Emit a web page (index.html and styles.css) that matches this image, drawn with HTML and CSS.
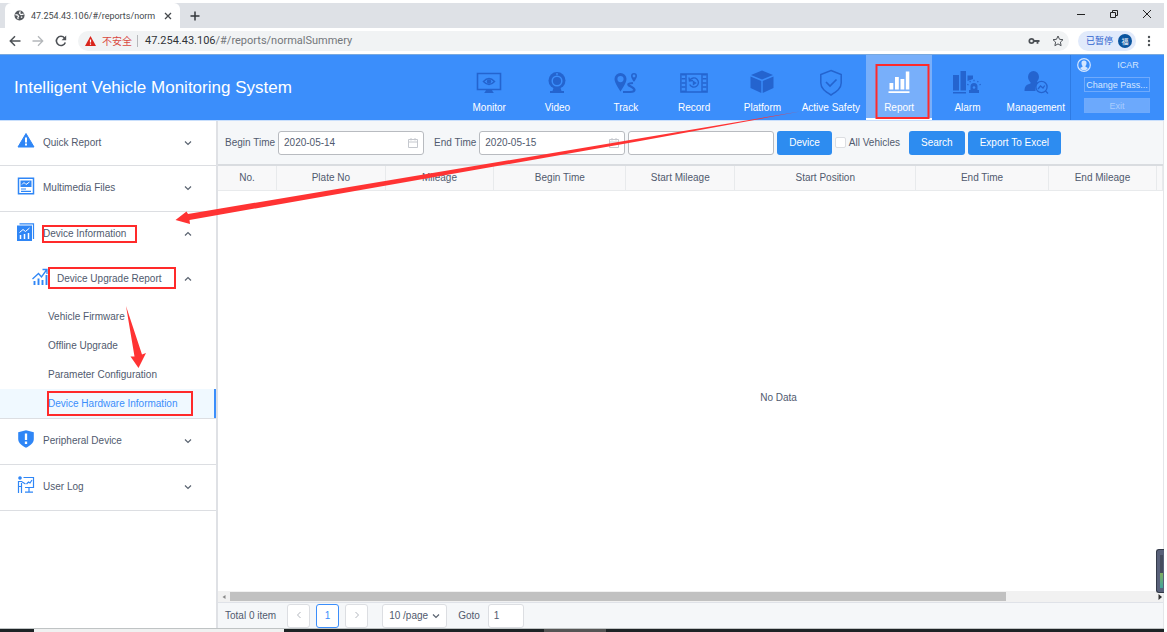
FILE: index.html
```html
<!DOCTYPE html>
<html lang="en">
<head>
<meta charset="utf-8">
<title>Intelligent Vehicle Monitoring System</title>
<link rel="stylesheet" href="styles.css">
</head>
<body>
<div class="window">
  <div class="tabstrip">
    <div class="tab">
      <svg class="globe" viewBox="0 0 12 12"><circle cx="6" cy="6" r="5.500" fill="#54585d"/><path d="M1.500 5l2.500.5 1 1.500-.8 1L4.500 10M7 1.500L6 3.500 7.500 5 10.500 4.500M7.500 7.500l1.500.5" fill="none" stroke="#fff" stroke-width="1.300"/></svg>
      <span class="tab-title">47.254.43.106/#/reports/norm</span>
      <button class="plain" aria-label="Close tab"><svg width="8" height="8" viewBox="0 0 8 8"><path d="M1 1l6 6M7 1L1 7" stroke="#45494d" stroke-width="1.300"/></svg></button>
    </div>
    <button class="plain newtab" aria-label="New tab"><svg width="10" height="10" viewBox="0 0 10 10"><path d="M5 .5v9M.5 5h9" stroke="#33373b" stroke-width="1.500"/></svg></button>
    <div class="winbtns">
      <button class="plain" aria-label="Minimize"><svg width="10" height="10" viewBox="0 0 10 10"><path d="M1 5.500h8" stroke="#222"/></svg></button>
      <button class="plain" aria-label="Restore"><svg width="10" height="10" viewBox="0 0 10 10"><path d="M1.500 3.500h5v5h-5zM3.500 3V1.500h5v5H7" fill="none" stroke="#222"/></svg></button>
      <button class="plain" aria-label="Close"><svg width="10" height="10" viewBox="0 0 10 10"><path d="M1 1l8 8M9 1L1 9" stroke="#222"/></svg></button>
    </div>
  </div>

  <div class="addressbar">
    <button class="plain" aria-label="Back"><svg width="12" height="12" viewBox="0 0 12 12"><path d="M11.500 6H1.500M6 1.300L1.300 6 6 10.700" fill="none" stroke="#4d5156" stroke-width="1.500"/></svg></button>
    <button class="plain" aria-label="Forward"><svg width="12" height="12" viewBox="0 0 12 12"><path d="M.5 6h10M6 1.300L10.700 6 6 10.700" fill="none" stroke="#b4b7ba" stroke-width="1.300"/></svg></button>
    <button class="plain" aria-label="Reload"><svg width="12" height="12" viewBox="0 0 12 12"><path d="M10.300 7.500A4.600 4.600 0 1 1 9.500 2.900" fill="none" stroke="#4d5156" stroke-width="1.600"/><path d="M11.200.6v4.600H6.600z" fill="#4d5156"/></svg></button>
    <div class="url">
      <svg width="11" height="10" viewBox="0 0 11 10"><path d="M5.500 0L11 10H0z" fill="#d9251c"/><path d="M5.500 3.500v3M5.500 7.500v1.200" stroke="#fff" stroke-width="1.200"/></svg>
      <span class="unsafe">不安全</span>
      <span class="url-text"><b>47.254.43.106</b>/#/reports/normalSummery</span>
      <svg class="key" width="12" height="8" viewBox="0 0 12 8"><circle cx="3.500" cy="4" r="2.200" fill="none" stroke="#4d5156" stroke-width="1.700"/><path d="M6 4h5.500M9.500 4v2.800" stroke="#4d5156" stroke-width="1.800"/></svg>
      <svg width="12" height="12" viewBox="0 0 12 12"><path d="M6 1l1.500 3.300 3.500.4-2.600 2.400.7 3.600L6 8.900l-3.100 1.800.7-3.600L1 4.700l3.500-.4z" fill="none" stroke="#4d5156"/></svg>
    </div>
    <div class="profile"><span>已暂停</span><i>福</i></div>
    <button class="plain" aria-label="Menu"><svg width="4" height="12" viewBox="0 0 4 12" fill="#4d5156"><circle cx="2" cy="2" r="1.200"/><circle cx="2" cy="6" r="1.200"/><circle cx="2" cy="10" r="1.200"/></svg></button>
  </div>

  <header class="header">
    <h1>Intelligent Vehicle Monitoring System</h1>
    <nav class="nav">
      <a href="#"><svg viewBox="0 0 28 28"><path d="M2.500 5.500h23v16h-23z" fill="none" stroke="#2464cf" stroke-width="1.600"/><path d="M11 22h6l1 2 1 1H9l1-1z" fill="#2464cf"/><path d="M8.500 13.500q5.500-6 11 0-5.500 6-11 0z" fill="none" stroke="#2464cf" stroke-width="1.500"/><circle cx="14" cy="13.500" r="2.200" fill="#2464cf"/></svg>Monitor</a>
      <a href="#"><svg viewBox="0 0 28 28"><circle cx="14" cy="12.500" r="8.500" fill="#2464cf"/><circle cx="14" cy="13" r="4.800" fill="none" stroke="#3b8efb" stroke-width="1.500"/><circle cx="14" cy="6" r=".9" fill="#3b8efb"/><path d="M10.500 20h7l1 3H21v2H7v-2h2.500z" fill="#2464cf"/></svg>Video</a>
      <a href="#"><svg viewBox="0 0 28 28"><path d="M8.500 5a6 6 0 0 0-6 6c0 4 6 12.500 6 12.500s6-8.500 6-12.500a6 6 0 0 0-6-6zm0 3a3 3 0 1 1 0 6.200 3 3 0 0 1 0-6.200z" fill="#2464cf" fill-rule="evenodd"/><path d="M22 5a3 3 0 0 0-3 3c0 2 3 6 3 6s3-4 3-6a3 3 0 0 0-3-3zm0 1.600a1.400 1.400 0 1 1 0 2.800 1.400 1.400 0 0 1 0-2.800z" fill="#2464cf" fill-rule="evenodd"/><path d="M21 15c-5 .5-6 1.500-3 3 5 2.500 7 5.500 0 6h-7" fill="none" stroke="#2464cf" stroke-width="2.200"/></svg>Track</a>
      <a href="#"><svg viewBox="0 0 28 28"><path d="M.9 6h26.200v18H.9zM6 6v18M22 6v18" fill="none" stroke="#2464cf" stroke-width="1.400"/><path d="M3.500 6v18M24.500 6v18" stroke="#2464cf" stroke-width="4" stroke-dasharray="1.500 2.600"/><path d="M10 12a4.600 4.600 0 1 1-.3 4.500M9 9.500l.5 3.500 3.500-.5" fill="none" stroke="#2464cf" stroke-width="1.400"/><path d="M12.800 12.500l4 2.500-4 2.500z" fill="#2464cf"/></svg>Record</a>
      <a href="#"><svg viewBox="0 0 28 28"><path d="M14 2.500l11 4.500-11 4.500L3 7zM2.500 8.500l10.800 4.400v12L2.500 20zM25.500 8.500l-10.800 4.400v12L25.500 20z" fill="#2464cf"/></svg>Platform</a>
      <a href="#"><svg viewBox="0 0 28 28"><path d="M14 2.500l10.200 4V15c0 5.500-4.500 8.500-10.200 12C8.300 23.500 3.800 20.500 3.800 15V6.500z" fill="none" stroke="#2464cf" stroke-width="1.500"/><path d="M9 14l4 4 6.500-6.500" fill="none" stroke="#2464cf" stroke-width="1.700"/></svg>Active Safety</a>
      <a href="#" class="active"><svg viewBox="0 0 28 28" fill="#fff"><path d="M3.500 23.300h21V25h-21zM4.500 15h3.800v6.500H4.500zM10 9h3.800v12.500H10zM15.500 11h3.800v10.500h-3.800zM20.800 3.500h3.500v18h-3.500z"/></svg>Report</a>
      <a href="#"><svg viewBox="0 0 28 28" fill="#2464cf"><path d="M0 7h6v15.500H0zM7.500 3H13v19.500H7.500zM14.500 7.500H20V11l-5.500 2zM0 24h13v1.500H0zM17.500 18.500a3.500 3.500 0 0 1 7 0V22H26v3H16v-3h1.500z"/><circle cx="21" cy="19.500" r="1.300" fill="#3b8efb"/><path d="M15.500 17l-1.200-.8M17.500 14.300l-.7-1.200M21 13.300v-1.500M24.500 14.300l.7-1.200M26.500 17l1.200-.8" stroke="#2464cf" stroke-width="1.200"/></svg>Alarm</a>
      <a href="#"><svg viewBox="0 0 28 28"><ellipse cx="11.500" cy="9" rx="5.500" ry="6" fill="#2464cf"/><path d="M8.500 13h6l2 3-3 3v4h-11c0-5 2-6.500 6-7.500z" fill="#2464cf"/><circle cx="19.500" cy="19" r="5.600" fill="#3b8efb" stroke="#2464cf" stroke-width="1.300"/><path d="M16 21l2.500-3 2.500 2 1.700-2.500M23.500 23l2.500 2.500" fill="none" stroke="#2464cf" stroke-width="1.300"/></svg>Management</a>
    </nav>
    <div class="user">
      <div class="who"><svg width="14" height="14" viewBox="0 0 14 14"><circle cx="7" cy="7" r="6.300" fill="none" stroke="#d5e6ff" stroke-width="1.200"/><path d="M7 2.500a2.500 2.500 0 0 0-2.500 2.700c0 1.500.7 2.300 1 2.800v.8l-2 1V11q3.500 2.500 7 0V9.800l-2-1V8c.3-.5 1-1.300 1-2.800A2.500 2.500 0 0 0 7 2.500z" fill="#d5e6ff"/></svg><span>ICAR</span></div>
      <button class="pass">Change Pass...</button>
      <button class="exit">Exit</button>
    </div>
  </header>

  <div class="body">
    <aside class="side">
      <section>
        <button class="row"><svg class="ico" viewBox="0 0 18 18"><path d="M9 1.500L17 15H1z" fill="#2f86f6" stroke="#2f86f6" stroke-linejoin="round"/><path d="M9 5.500v5M9 11.500v2" stroke="#fff" stroke-width="2"/></svg><span>Quick Report</span><svg class="chev" viewBox="0 0 8 8"><path d="M1 2.500l3 3 3-3"/></svg></button>
      </section>
      <section>
        <button class="row"><svg class="ico" viewBox="0 0 18 18"><path d="M1.500 1.200h15v15.500h-15z" fill="#fff" stroke="#2f86f6" stroke-width="1.500"/><path d="M3.500 3.500h11v6.500h-11z" fill="#2f86f6"/><path d="M5 7.500l2-2 2 2 3.500-2.500" stroke="#fff" fill="none"/><path d="M4 12h5M4 14.300h10" stroke="#2f86f6" stroke-width="1.200"/></svg><span>Multimedia Files</span><svg class="chev" viewBox="0 0 8 8"><path d="M1 2.500l3 3 3-3"/></svg></button>
      </section>
      <section>
        <button class="row"><svg class="ico" viewBox="0 0 18 18"><path d="M2.500.8h14V16" fill="none" stroke="#2f86f6" stroke-width="1.200"/><path d="M0 2.500h15v15.500H0z" fill="#2f86f6"/><path d="M3.500 16v-4M7.500 16v-5M11.500 16v-6" stroke="#fff" stroke-width="1.500"/><path d="M2.500 9.500l3.500-3 2.500 2L12.500 5" fill="none" stroke="#fff"/></svg><span>Device Information</span><svg class="chev" viewBox="0 0 8 8"><path d="M1 5.500l3-3 3 3"/></svg></button>
        <button class="row sub"><svg class="ico" viewBox="0 0 18 18"><path d="M3.500 17v-4M7.500 17v-6.500M11.500 17v-5M15.500 17V7" stroke="#2f86f6" stroke-width="1.900"/><path d="M1.500 11l6-5.500 3 3.500L15.500 2M11.500 1.500H16V6" fill="none" stroke="#2f86f6" stroke-width="1.300"/></svg><span>Device Upgrade Report</span><svg class="chev" viewBox="0 0 8 8"><path d="M1 5.500l3-3 3 3"/></svg></button>
        <ul>
          <li><a href="#">Vehicle Firmware</a></li>
          <li><a href="#">Offline Upgrade</a></li>
          <li><a href="#">Parameter Configuration</a></li>
          <li><a href="#" class="on">Device Hardware Information</a></li>
        </ul>
      </section>
      <section>
        <button class="row"><svg class="ico" viewBox="0 0 18 18"><path d="M9 .3l7.800 2V9c0 4-3.500 6.500-7.800 8.800C4.700 15.500 1.200 13 1.200 9V2.300z" fill="#2f86f6"/><path d="M9 3.500v6.500M9 11.500v2.500" stroke="#fff" stroke-width="2.300"/></svg><span>Peripheral Device</span><svg class="chev" viewBox="0 0 8 8"><path d="M1 2.500l3 3 3-3"/></svg></button>
      </section>
      <section>
        <button class="row"><svg class="ico" viewBox="0 0 18 18" fill="none" stroke="#2f86f6" stroke-width="1.200"><circle cx="3" cy="2" r="1.200" fill="#2f86f6"/><path d="M6.500 1.500h10v10H8M12 11.500v4M8 16.200h8M1.500 17V5.500h3L8.500 8M4.500 17V7M1.500 10.500h3M9.500 8l2-2 1.500 1 2-3"/></svg><span>User Log</span><svg class="chev" viewBox="0 0 8 8"><path d="M1 2.500l3 3 3-3"/></svg></button>
      </section>
    </aside>

    <main class="main">
      <form class="filters">
        <label for="begin">Begin Time</label>
        <span class="field"><input id="begin" type="text" value="2020-05-14"><svg viewBox="0 0 10 10"><path d="M.5 1.500h9v8h-9zM.5 4h9M3 0v2.500M7 0v2.500"/></svg></span>
        <label for="end" class="end">End Time</label>
        <span class="field"><input id="end" type="text" value="2020-05-15"><svg viewBox="0 0 10 10"><path d="M.5 1.500h9v8h-9zM.5 4h9M3 0v2.500M7 0v2.500"/></svg></span>
        <span class="field"><input type="text" aria-label="Device"></span>
        <button type="button" class="btn">Device</button>
        <label class="all"><input type="checkbox">All Vehicles</label>
        <button type="button" class="btn">Search</button>
        <button type="button" class="btn">Export To Excel</button>
      </form>
      <table class="grid">
        <colgroup><col class="c-no"><col class="c-s"><col class="c-s"><col class="c-m"><col class="c-s"><col class="c-l"><col class="c-m"><col class="c-s"><col class="c-end"></colgroup>
        <thead><tr><th>No.</th><th>Plate No</th><th>Mileage</th><th>Begin Time</th><th>Start Mileage</th><th>Start Position</th><th>End Time</th><th>End Mileage</th><th></th></tr></thead>
      </table>
      <div class="empty">No Data
        <div class="meter"><i></i></div>
      </div>
      <div class="scroll"><svg width="6" height="6" viewBox="0 0 6 6"><path d="M4.500 1v4L1.500 3z" fill="#888"/></svg><div class="track"><div class="thumb"></div></div><svg width="6" height="6" viewBox="0 0 6 6"><path d="M1.500 0v6L5 3z" fill="#333"/></svg></div>
      <div class="pager">
        <span class="total">Total 0 item</span>
        <button aria-label="Previous page"><svg width="8" height="8" viewBox="0 0 8 8"><path d="M5.500 1l-3 3 3 3"/></svg></button>
        <button class="current">1</button>
        <button aria-label="Next page"><svg width="8" height="8" viewBox="0 0 8 8"><path d="M2.500 1l3 3-3 3"/></svg></button>
        <span class="size"><select aria-label="Page size"><option>10 /page</option></select><svg class="chev" viewBox="0 0 8 8"><path d="M1 2.500l3 3 3-3"/></svg></span>
        <label for="goto">Goto</label>
        <input id="goto" type="text" value="1">
      </div>
    </main>
  </div>
  <div class="taskbar"><i></i><b></b><em></em></div>

  <svg class="marks" width="1167" height="632" viewBox="0 0 1167 632">
    <g fill="none" stroke="#ff2a2a" stroke-width="2">
      <path d="M876.500 65h52v53h-52zM43 226h93v16H43zM49 268h126v20H49zM48 392h144v23H48z"/>
    </g>
    <g fill="#ff3333">
      <path d="M800 111.500L188 214 186.500 211.500 175.500 220 190 224 189.500 220 640 141z"/>
      <path d="M126 306L142 354.500 146 353 138.500 368 130.500 356.500 134.500 356.500z"/>
    </g>
  </svg>
</div>
</body>
</html>
```

FILE: styles.css
```css
* { box-sizing: border-box; }
body { margin: 0; font: 10px/16px "Liberation Sans", Arial, sans-serif; color: #515a6e; background: #fff; }
button, input, select { font: inherit; color: inherit; }
button { cursor: pointer; }
a { color: inherit; text-decoration: none; }
.window { position: relative; display: flex; flex-direction: column; min-height: 100vh; padding: 3px 3px 0 0; }
.plain { display: flex; align-items: center; justify-content: center; padding: 0; border: 0; background: none; }

.tabstrip { display: flex; align-items: center; height: 25px; background: #dee1e6; font-family: Roboto, "Noto Sans", sans-serif; }
.tab { display: flex; align-items: center; align-self: stretch; width: 175px; margin-left: 5px; padding: 0 8px 0 9px; gap: 6px; background: #fff; border-radius: 6px 6px 0 0; }
.globe { width: 11px; height: 11px; flex: none; }
.tab-title { flex: 1; white-space: nowrap; font-size: 9px; color: #45494d; }
.newtab { margin-left: 10px; }
.winbtns { display: flex; gap: 23px; margin-left: auto; padding: 0 12px 4px 0; }

.addressbar { display: flex; align-items: center; gap: 11px; height: 26px; padding: 0 13px 0 9px; font-size: 11px; font-family: Roboto, "Noto Sans CJK SC", sans-serif; }
.url { display: flex; align-items: center; flex: 1; height: 20px; padding: 0 5px 0 7px; border-radius: 10px; background: #f1f3f4; }
.unsafe { margin-left: 6px; padding-right: 5px; border-right: 1px solid #b5b8bb; line-height: 12px; font-family: "Noto Sans CJK SC", sans-serif; font-size: 10px; color: #d9483f; }
.url-text { flex: 1; margin-left: 7px; color: #73777b; }
.url-text b { font-weight: 400; color: #303438; }
.key { margin-right: 12px; }
.profile { display: flex; align-items: center; gap: 5px; height: 20px; margin-left: -2px; padding: 0 4px 0 8px; border-radius: 10px; background: #e1eafb; color: #3063cf; font: 9px/12px "Noto Sans CJK SC", sans-serif; }
.profile i { width: 14px; height: 14px; border-radius: 50%; background: #0b559f; color: #fff; font: 7px/14px "Noto Sans CJK SC", sans-serif; text-align: center; }

.header { display: flex; height: 67px; border-top: 1px solid #79a9de; border-bottom: 1px solid #c9dffc; background: #3b8efb; color: #fff; }
.header h1 { flex: 1; margin: 0; padding-left: 14px; font-size: 17px; font-weight: 400; line-height: 66px; white-space: nowrap; }
.nav { display: flex; flex: 0 0 615px; }
.nav a { display: flex; flex: 1 1 0; flex-direction: column; align-items: center; min-width: 0; margin: 0 1px; padding-top: 13px; white-space: nowrap; }
.nav svg { width: 28px; height: 28px; margin-bottom: 4px; }
.nav .active { background: #78affa; border-bottom: 2px solid #fff; }
.user { display: flex; flex-direction: column; gap: 5px; width: 94px; padding: 3px 14px 0 13px; border-left: 1px solid #2e7be4; color: #d5e6ff; font-size: 9px; }
.who { display: flex; align-items: center; height: 14px; margin-left: -7px; }
.who span { flex: 1; padding-left: 15px; text-align: center; }
.user button { height: 15px; padding: 0; border: 1px solid #6faafc; background: none; line-height: 12px; white-space: nowrap; }
.user .exit { background: #6ca9fc; color: #a9cdff; margin-top: 1px; }

.body { display: flex; flex: 1; }
.side { width: 218px; flex: none; border-right: 2px solid #dfe1e5; }
.side section { border-bottom: 1px solid #dcdee2; }
.side section:first-child .row { height: 44px; }
.row { display: flex; align-items: center; width: 100%; height: 45px; padding: 0 24px 1px 17px; border: 0; background: none; text-align: left; }
.row span { flex: 1; margin-left: 8px; }
.ico { width: 18px; height: 18px; margin-bottom: 4px; }
.row.sub { padding-left: 31px; }
.chev { width: 8px; height: 8px; fill: none; stroke: #5a6370; stroke-width: 1.2; }
.side ul { margin: 0; padding: 0; list-style: none; }
.side li a { display: block; padding-left: 48px; line-height: 29px; }
.side li .on { background: #f0f9ff; border-right: 2px solid #3b8efb; color: #3b8efb; }

.main { display: flex; flex: 1; flex-direction: column; min-width: 0; border-right: 1px solid #e4e6e9; }
.filters { display: flex; align-items: center; gap: 3px; height: 45px; padding: 0 7px; background: #f5f7f9; border-bottom: 2px solid #d9dce0; white-space: nowrap; }
.field { position: relative; width: 146px; }
.field input { display: block; width: 100%; height: 24px; padding: 0 5px; border: 1px solid #b8bbc0; border-radius: 3px; background: #fff; }
.field svg { position: absolute; right: 6px; top: 7px; width: 10px; height: 10px; fill: none; stroke: #c5c8ce; }
.filters .end { margin-left: 7px; }
.btn { height: 24px; padding: 0 12px; border: 0; border-radius: 3px; background: #2d8cf0; color: #fff; }
.all { display: flex; align-items: center; gap: 3px; margin-right: 6px; }
.all input { appearance: none; width: 11px; height: 11px; margin: 0; border: 1px solid #dcdee2; border-radius: 2px; background: #fff; }

.grid { width: 100%; table-layout: fixed; border-collapse: collapse; }
.c-no { width: 6.2%; }
.c-s { width: 11.5%; }
.c-m { width: 14%; }
.c-l { width: 19.2%; }
.grid th { height: 24px; padding: 0; border: solid #e8eaec; border-width: 0 1px 1px 0; background: #f8f8f9; font-weight: 400; }
.empty { position: relative; display: flex; flex: 1; align-items: center; justify-content: center; padding: 14px 0 0 176px; }
.meter { position: absolute; right: -1px; bottom: -2px; width: 8px; height: 44px; padding: 5px 1px 4px 3px; border-radius: 3px 0 0 3px; border: 1px solid #343b49; border-right: 0; background: #59617a; }
.meter i { display: block; height: 100%; background: linear-gradient(#454c5e 55%, #7fae62 55%, #43a39b); }
.scroll { display: flex; align-items: center; gap: 3px; height: 11px; padding: 0 0 0 3px; background: #f1f1f1; }
.track { flex: 1; }
.thumb { width: 84%; height: 9px; background: #c1c1c1; }
.pager { display: flex; align-items: center; gap: 6px; height: 26px; padding-left: 7px; border-top: 1px solid #dfe2e8; background: #f5f7f9; }
.total { margin-right: 5px; }
.pager button, .pager input, .pager select { height: 24px; border: 1px solid #dcdee2; border-radius: 3px; background: #fff; }
.pager button { width: 23px; padding: 0; }
.pager button svg { fill: none; stroke: #b3b7be; }
.pager .current { border-color: #3b8efb; color: #3b8efb; }
.size { position: relative; margin: 0 5px 0 8px; }
.size select { display: block; appearance: none; width: 65px; padding: 0 6px; }
.size .chev { position: absolute; right: 7px; top: 8px; pointer-events: none; }
.pager input { width: 36px; margin-left: 2px; padding: 0 5px; }
.taskbar { display: flex; height: 4px; border-top: 1px solid #bfc3c4; background: #1d2325; }
.taskbar i { width: 34px; }
.taskbar b { width: 250px; background: #f0f1f1; }
.taskbar em { width: 62px; margin-left: 260px; background: #555; }
.marks { position: absolute; left: 0; top: 0; pointer-events: none; }
```
